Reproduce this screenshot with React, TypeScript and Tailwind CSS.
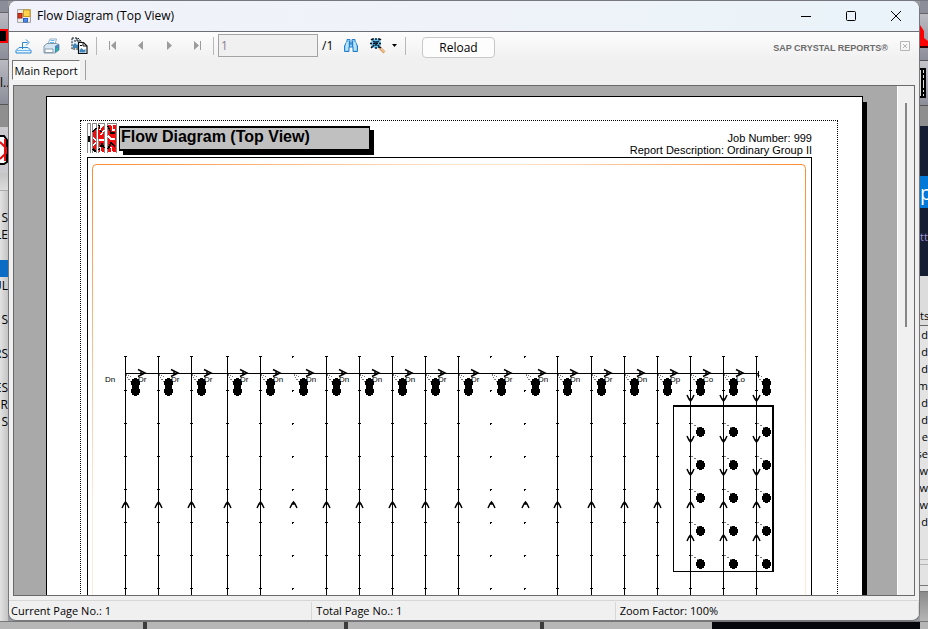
import React from 'react';

const ui = 'font-["Open_Sans","Noto_Sans",sans-serif]';

type Row = { text: string; tone?: string };

const leftRows: Row[] = [
  { text: 'S' },
  { text: 'LE' },
  { text: '' },
  { text: '', tone: 'bg-[#0a6cc4]' },
  { text: 'UL' },
  { text: '' },
  { text: 'S' },
  { text: '' },
  { text: 'RS' },
  { text: '' },
  { text: 'ES' },
  { text: 'R' },
  { text: 'S' },
];

const rightRows = ['d', 'd', 'd', 'm', 'd', 'd', 'e', 'se', 'w', 'w', 'w', 'd'];

const columns = [125, 158, 191, 227, 260, 293, 326, 359, 392, 425, 458, 491, 525, 557, 591, 624, 657, 690, 723, 756];
const dottedColumns = [293, 491, 525];
const downColumns = [690, 723, 756];
const labels = ['Dr', 'Dr', 'Dr', 'Dr', 'Dn', 'Dn', 'Dn', 'Dn', 'Dn', 'Dr', 'Dr', 'Dr', 'Dn', 'Dn', 'Dr', 'Dn', 'Dp', 'Co', 'Lo'];
const ticks = [356, 390, 423, 456, 489, 522, 555, 588];

function UpArrow({ x, y }: { x: number; y: number }) {
  return <path d={`M${x - 3} ${y + 6}L${x - 1} ${y + 2}L${x + 0.5} ${y}L${x + 2} ${y + 2}L${x + 4} ${y + 6}M${x - 1} ${y + 2}H${x + 2}`} fill="none" stroke="#000" strokeWidth="1.5" />;
}

function DownArrow({ x, y }: { x: number; y: number }) {
  return <path d={`M${x - 3} ${y - 6}L${x - 1} ${y - 2}L${x + 0.5} ${y}L${x + 2} ${y - 2}L${x + 4} ${y - 6}M${x - 1} ${y - 2}H${x + 2}`} fill="none" stroke="#000" strokeWidth="1.5" />;
}

function RightArrow({ x, y }: { x: number; y: number }) {
  return <path d={`M${x - 7} ${y - 3.5}L${x} ${y}L${x - 7} ${y + 3.5}M${x - 4} ${y - 2}V${y + 2}`} fill="none" stroke="#000" strokeWidth="1.5" />;
}

function Drop({ x, y }: { x: number; y: number }) {
  return <path d={`M${x - 1} ${y - 5}h3v1h2v2h1v4h-1v2h-2v1h-3v-1h-2v-2h-1v-4h1v-2h2z`} />;
}

function FlowDiagram() {
  return (
    <svg viewBox="88 158 723 560" width="723" height="560" className="block" role="img" aria-label="Flow diagram">
      <defs>
        <linearGradient id="frameTop" gradientUnits="userSpaceOnUse" x1="92" x2="806" y1="0" y2="0">
          <stop offset="0" stopColor="#fb8b33" />
          <stop offset="0.5" stopColor="#fde3cc" />
          <stop offset="0.6" stopColor="#fde3cc" />
          <stop offset="1" stopColor="#fb8b33" />
        </linearGradient>
        <linearGradient id="frameSide" gradientUnits="userSpaceOnUse" x1="0" x2="0" y1="164" y2="500">
          <stop offset="0" stopColor="#fb8b33" />
          <stop offset="1" stopColor="#fdeadb" />
        </linearGradient>
      </defs>
      <path d="M96 164h706v1H96z" fill="url(#frameTop)" />
      <path d="M92.500 720V168.500Q92.500 164.500 96.500 164.500M805.500 720V168.500Q805.500 164.500 801.500 164.500" stroke="url(#frameSide)" fill="none" />

      <g className='font-["Liberation_Sans",Arial,sans-serif] text-[8px]'>
        <text x="105" y="382">Dn</text>
        {labels.map((label, i) => (
          <text key={columns[i]} x={columns[i] + 13} y="382">{label}</text>
        ))}
      </g>

      <g shapeRendering="crispEdges">
        <path d="M125 373.500H759M758.500 371V377" stroke="#000" />
        {columns.map((x) => (
          <g key={x}>
            {!dottedColumns.includes(x) && <path d={`M${x + 0.5} 356V720`} stroke="#000" />}
            {ticks.map((y) => (
              <path key={y} d={dottedColumns.includes(x) ? `M${x - 1} ${y}h2v1h-1v1h-1z` : `M${x - 1} ${y}h3v1h-3z`} />
            ))}
            <path d={`M${x + 1} 374l9 5M${x + 1} 375l6 9`} stroke="#777" strokeDasharray="1 1.5" />
            <Drop x={x + 10} y={383} />
            <Drop x={x + 10} y={391} />
            <rect x={x + 7} y="383" width="7" height="8" />
          </g>
        ))}
        {downColumns.map((x) =>
          [432, 465, 498, 531, 564].map((y) => (
            <g key={`${x}-${y}`}>
              <path d={`M${x + 1} ${y - 9}l9 6`} stroke="#777" strokeDasharray="2 1.5" />
              <Drop x={x + 10} y={y} />
            </g>
          )),
        )}
        <path d="M673.500 571.500V406M673 571.500H773" stroke="#000" />
        <path d="M673 406H774M773 405V572" stroke="#000" strokeWidth="2" />
      </g>

      {columns.slice(0, -1).map((x) => (
        <RightArrow key={x} x={x + 20} y={373} />
      ))}
      {columns.map((x) => (
        <UpArrow key={x} x={x} y={502} />
      ))}
      {downColumns.map((x) => (
        <g key={x}>
          <UpArrow x={x} y={535} />
          <DownArrow x={x} y={401} />
          <DownArrow x={x} y={442} />
          <DownArrow x={x} y={475} />
        </g>
      ))}
    </svg>
  );
}

function ReportLogo() {
  return (
    <svg viewBox="0 0 30 30" width="30" height="30" shapeRendering="crispEdges" aria-hidden="true">
      <path d="M0 0h4v30H0zM5 0h5v30H5zM11 0h7v30h-7zM20 0h10v30H20z" fill="#fff" />
      <path d="M.500 30V.500h3V30M5.500 30V.500h4V30M11.500 30V.500h6V30M20.500 30V.500h9V30" fill="none" stroke="#8a8a8a" />
      <path d="M2 17l1-3v7zM6 10l3-6v25l-3-3zM11 3l2 3 4-4v27h-5zM21 2h8v27h-8z" fill="#f00d0d" />
      <path d="M2 13v6M6 9l3-4M6 26l3 3M12 2l2 7M12 27l3-6 2 4M21 3l3 7h4M21 26l3-6 4 3" fill="none" stroke="#000" strokeWidth="1.500" />
      <path d="M6 15l3 2M6 22l3-2M14 2l-1 5M17 7l-3 5M12 17h5M14 29l-1-5M25 2l1 5h2M21 13l3 3h4M25 29l-1-5" fill="none" stroke="#fff" strokeWidth="1.500" />
    </svg>
  );
}

function FormIcon() {
  return (
    <svg viewBox="0 0 14 14" width="14" height="14" aria-hidden="true">
      <path d="M.500.500h13v13H.500z" fill="#e9e9e9" stroke="#a6a6a6" />
      <rect x="6.500" y="1" width="6.500" height="6.500" fill="#ffd34f" stroke="#c99a17" />
      <rect x="1" y="4.500" width="4" height="4.500" fill="#d33a22" stroke="#a4200f" />
      <rect x="6.500" y="9.500" width="4" height="3.500" fill="#4a8cf0" stroke="#2e62c0" />
    </svg>
  );
}

function ExportIcon() {
  return (
    <svg viewBox="0 0 17 16" width="17" height="16" fill="none" stroke="#2f87d2" aria-hidden="true">
      <path d="M4 9.500L1 12.500V15h15v-2.500l-3-3z" fill="#e4f4ff" />
      <path d="M1 12.500h15" stroke="#6db8ef" />
      <path d="M7.500 11V4.500h5M11 1.500l3 3-3 3" />
    </svg>
  );
}

function PrintIcon() {
  return (
    <svg viewBox="0 0 17 16" width="17" height="16" aria-hidden="true">
      <path d="M5 6L7 1h6.500L12 6z" fill="#fff" stroke="#8fb0c9" />
      <path d="M7.500 2.500h4M7 4.500h4" stroke="#67b4e8" />
      <path d="M1 8l3-2.500h9l3 1V12l-4 3H1z" fill="#d5e6f2" stroke="#8299ac" />
      <path d="M12 8l4-2v6l-4 3z" fill="#4387b7" />
      <path d="M2 11h8v3.500H2z" fill="#fff" stroke="#8c9eb0" />
      <path d="M13 10h2v3h-2z" fill="#22b7a0" />
    </svg>
  );
}

function CopyIcon() {
  return (
    <svg viewBox="0 0 17 17" width="17" height="17" aria-hidden="true">
      <path d="M1 1h6l3 3v8H1z" fill="#e8f5ff" stroke="#111" strokeDasharray="2 1" />
      <path d="M2 8l2-2 2 2 2-1v4H2z" fill="#3f86bd" />
      <path d="M3 4h2M6 1v3h3" fill="none" stroke="#111" />
      <path d="M7.500 5.500h5l3.500 3.500v7.500H7.500z" fill="#fff" stroke="#111" strokeWidth="1.200" />
      <path d="M8.500 13l2-2 2 2 2-1v3.500h-6z" fill="#3f86bd" />
      <path d="M9 8.500h2M12 6v3h4" fill="none" stroke="#111" />
    </svg>
  );
}

function NavIcon({ d }: { d: string }) {
  return (
    <svg viewBox="0 0 8 9" width="8" height="9" fill="#9c9c9c" aria-hidden="true">
      <path d={d} />
    </svg>
  );
}

function BinocularsIcon() {
  return (
    <svg viewBox="0 0 14 13" width="14" height="13" stroke="#277fc7" aria-hidden="true">
      <path d="M.500 12.500V7L3 2V.500h3V4h2V.500h3V2l2.500 5v5.500H9V8H5v4.500z" fill="#8fd0ff" />
      <path d="M3 3v8M11 3v8" stroke="#e4f6e0" />
      <path d="M5.500 2v6M8.500 2v6M5.500 5h3" />
    </svg>
  );
}

function ZoomIcon() {
  return (
    <svg viewBox="0 0 16 16" width="16" height="16" aria-hidden="true">
      <path d="M9.500 9.500l5 5" stroke="#d9a067" strokeWidth="3" />
      <path d="M10 9.500l4.500 4.500" stroke="#fbe2be" />
      <circle cx="6" cy="5.500" r="5" fill="#67c3f5" />
      <path d="M1 1l10 9M11 1L1 10M6 0v12M0 5.500h12M3 0v3M9 2v-2M2 8v3M9 8v3" stroke="#08131f" strokeWidth="1.400" strokeDasharray="2 1" />
    </svg>
  );
}

function Separator() {
  return <span className="h-[18px] w-px shrink-0 bg-[#b8b8b8]" />;
}

export default function App() {
  return (
    <div className={`flex h-screen w-full flex-col overflow-hidden bg-[#b4b4b4] text-black ${ui}`}>
      <div className="h-px shrink-0 bg-[#77777f]" />
      <div className="flex min-h-0 flex-1 bg-[#9a9ca3]">
        <aside className="flex w-2 shrink-0 flex-col overflow-hidden bg-linear-to-r from-[#e2e2e2] to-[#c4c4c4] text-xs leading-[17px]">
          <div className="h-3 shrink-0 border-b border-[#666] bg-[#8b8d98]" />
          <div className="flex h-[47px] shrink-0 items-center border-b border-[#555] bg-linear-to-b from-[#b9bac2] to-[#8b8d98]">
            <span className="h-[14px] w-full border-y-2 border-r-2 border-[#f00] bg-black" />
          </div>
          <div className="flex h-[45px] shrink-0 items-center border-b border-[#555] bg-linear-to-b from-[#b9bac2] to-[#8b8d98]">l..</div>
          <div className="h-[22px] shrink-0 bg-[#8f8f8f]" />
          <div className="flex h-[46px] shrink-0 items-center bg-[#c9c9ce]">
            <svg viewBox="0 0 8 30" width="8" height="30" aria-hidden="true">
              <path d="M0 1h4l3 4v22l-3 2H0" fill="#fff" stroke="#000" strokeWidth="2" />
              <path d="M0 7l6 6v5l-6 6M5 4v22" fill="none" stroke="#e01010" strokeWidth="2" />
            </svg>
          </div>
          <div className="h-[18px] shrink-0 border-b border-[#aaa] bg-linear-to-b from-[#c4c4c4] to-[#dcdcdc]" />
          <div className="h-[18px] shrink-0" />
          {leftRows.map((row, i) => (
            <div key={i} className={`flex h-[17px] shrink-0 justify-end ${row.tone ?? ''}`}>{row.text}</div>
          ))}
        </aside>

        <main className="flex min-w-0 flex-1 flex-col overflow-hidden rounded-[8px] border-x border-b border-[#77777b] bg-[#f0f0f0]">
          <header className="flex h-[31px] shrink-0 items-center gap-[6px] border-b border-[#6f6f73] bg-linear-to-r from-[#f1f2fb] via-[#eff3f9] to-[#e9f3f9] pl-2">
            <FormIcon />
            <h1 className="flex-1 text-xs">Flow Diagram (Top View)</h1>
            <div className="flex">
              <button aria-label="Minimize" className="flex h-[30px] w-[45px] items-center justify-center">
                <svg viewBox="0 0 10 10" width="10" height="10" stroke="#000"><path d="M0 5.500h10" /></svg>
              </button>
              <button aria-label="Maximize" className="flex h-[30px] w-[45px] items-center justify-center">
                <svg viewBox="0 0 10 10" width="10" height="10" fill="none" stroke="#000"><rect x=".500" y=".500" width="9" height="9" rx="1" /></svg>
              </button>
              <button aria-label="Close" className="flex h-[30px] w-[46px] items-center justify-center">
                <svg viewBox="0 0 10 10" width="10" height="10" stroke="#000"><path d="M0 0l10 10M10 0L0 10" /></svg>
              </button>
            </div>
          </header>

          <div className="flex h-7 shrink-0 items-center bg-linear-to-b from-[#fdfdfd] to-[#f0f0f0] pb-px pl-[6px] pr-[9px] text-xs">
            <div className="flex items-center gap-[11px]">
              <button aria-label="Export"><ExportIcon /></button>
              <button aria-label="Print"><PrintIcon /></button>
              <button aria-label="Copy"><CopyIcon /></button>
            </div>
            <div className="flex items-center pl-2"><Separator /></div>
            <div className="flex items-center gap-5 px-3">
              <button aria-label="First page"><NavIcon d="M0 0h1v9H0zM7 0v9L2 4.500z" /></button>
              <button aria-label="Previous page"><NavIcon d="M6 0v9L1 4.500z" /></button>
              <button aria-label="Next page"><NavIcon d="M2 0v9l5-4.500z" /></button>
              <button aria-label="Last page"><NavIcon d="M1 0v9l5-4.500zM7 0h1v9H7z" /></button>
            </div>
            <Separator />
            <input aria-label="Page number" defaultValue="1" className="ml-1 h-[23px] w-[100px] border border-[#a3a3a3] bg-[#f0f0f0] px-[2px] text-xs text-[#8a7f94]" />
            <span className="ml-1 w-[22px]">/1</span>
            <button aria-label="Find"><BinocularsIcon /></button>
            <button aria-label="Zoom" className="ml-3 mr-2 flex items-center gap-[6px]">
              <ZoomIcon />
              <svg viewBox="0 0 5 3" width="5" height="3" aria-hidden="true"><path d="M0 0h5L2.500 3z" /></svg>
            </button>
            <Separator />
            <button className="ml-4 mt-1 h-[21px] w-[73px] rounded-[4px] border border-[#c8c8c8] bg-[#fdfdfd] text-xs leading-4">Reload</button>
            <span className='ml-auto pt-1 font-["Liberation_Sans",Arial,sans-serif] text-[9px] font-bold text-[#6b6b6b]'>SAP CRYSTAL REPORTS®</span>
            <button aria-label="Close view" className="ml-3">
              <svg viewBox="0 0 10 10" width="10" height="10" fill="none" stroke="#b5b5b5"><path d="M.500.500h9v9h-9zM3 3l4 4M7 3L3 7" /></svg>
            </button>
          </div>

          <div className="flex h-[25px] shrink-0 items-start pl-[3px]">
            <button className="h-5 w-[68px] border border-r-white border-b-white border-l-[#777] border-t-[#777] bg-[#f9f9f9] pt-px text-[11px] leading-[18px]">Main Report</button>
            <span className="ml-[5px] h-5 w-px bg-[#a0a0a0]" />
          </div>

          <section className="ml-1 mr-[4px] flex min-h-0 flex-1 border border-[#6a6a6a] bg-[#a9a9a9]">
            <div className="flex min-w-0 flex-1 overflow-hidden pl-[2px] pt-[10px]">
              <div className="mx-auto flex shrink-0 items-start">
                <article className='w-[817px] border border-black bg-white pl-[33px] pr-6 pt-[23px] font-["Liberation_Sans",Arial,sans-serif]'>
                  <div className="border border-dotted border-black pl-[6px] pr-[25px]">
                    <div className="flex h-9 items-start pt-[2px]">
                      <ReportLogo />
                      <h2 className="ml-[2px] mt-[3px] h-[25px] w-[251px] border border-y-2 border-black bg-[#c0c0c0] pl-[1px] text-[16px] leading-[18px] font-bold shadow-[4px_4px_0_#000]">Flow Diagram (Top View)</h2>
                      <div className="ml-auto pt-[9px] text-right text-[11px] leading-3">
                        <p>Job Number: 999</p>
                        <p>Report Description: Ordinary Group II</p>
                      </div>
                    </div>
                    <div className="border border-black">
                      <FlowDiagram />
                    </div>
                  </div>
                </article>
                <div className="mt-[6px] w-1 self-stretch bg-black" />
              </div>
            </div>
            <div className="w-[17px] shrink-0 border-l border-white bg-[#f0f0f0] pl-[7px] pt-[17px]">
              <div className="h-[224px] w-[2px] bg-[#868686]" />
            </div>
          </section>

          <footer className="mt-1 grid h-5 shrink-0 grid-cols-3 border-t border-[#d7d7d7] pt-px text-[11px] leading-[18px]">
            <span className="border-r border-[#d7d7d7] pl-[2px]">Current Page No.: 1</span>
            <span className="border-r border-[#d7d7d7] pl-1">Total Page No.: 1</span>
            <span className="border-r border-[#d7d7d7] pl-1">Zoom Factor: 100%</span>
          </footer>
        </main>

        <aside className="flex w-2 shrink-0 flex-col overflow-hidden bg-[#e3e3e3] text-[11px] leading-[17px]">
          <div className="h-[13px] shrink-0 border-b border-[#666] bg-[#8b8d98]" />
          <div className="flex h-[47px] shrink-0 items-center border-b border-[#555] bg-linear-to-b from-[#b9bac2] to-[#8b8d98]">
            <svg viewBox="0 0 8 24" width="8" height="24" aria-hidden="true">
              <path d="M0 0l4 6v7l4 3v5H0z" fill="#f00" />
              <path d="M0 22h8" stroke="#300" strokeWidth="2" />
            </svg>
          </div>
          <div className="flex h-[45px] shrink-0 items-center border-b border-[#555] bg-linear-to-b from-[#c4c5cb] to-[#8b8d98]">
            <svg viewBox="0 0 6 30" width="6" height="30" aria-hidden="true">
              <path d="M0 0h6v30H0z" />
              <path d="M0 2h1v26H0zM3 2h1v3H3zM3 7h1v3H3zM3 12h1v8H3zM3 22h1v2H3zM3 26h1v2H3z" fill="#ddd" />
            </svg>
          </div>
          <div className="h-5 shrink-0 bg-[#8f8f8f]" />
          <div className="h-[50px] shrink-0 bg-[#151d33]" />
          <div className="h-8 shrink-0 bg-[#0078d7] text-xl leading-[34px] text-white">p</div>
          <div className="h-[68px] shrink-0 bg-[#151d33] pt-5 text-[#9a8fd0]">tt</div>
          <div className="h-[50px] shrink-0 border-b border-[#666] bg-[#dcdcdc] pt-[31px]">ts</div>
          {rightRows.map((row, i) => (
            <div key={i} className="flex h-[17px] shrink-0 justify-end">{row}</div>
          ))}
          <div className="mt-[29px] h-[6px] shrink-0 border-y border-[#b5b5b5]" />
          <div className="mt-5 h-[7px] shrink-0 border-y border-[#777]" />
          <div className="flex-1 bg-linear-to-b from-[#8b8b8b] to-[#b6b6b6]" />
        </aside>
      </div>
      <div className="flex h-2 shrink-0 border-t border-[#777] bg-[#b6b6b6]">
        <span className="w-[143px]" />
        <span className="w-1 bg-[#3c3c3c]" />
        <span className="w-[197px]" />
        <span className="w-1 bg-[#3c3c3c]" />
        <span className="w-[192px]" />
        <span className="w-1 bg-[#3c3c3c]" />
        <span className="w-[168px]" />
        <span className="flex-1 bg-[#05070c]" />
        <span className="w-2" />
      </div>
    </div>
  );
}
